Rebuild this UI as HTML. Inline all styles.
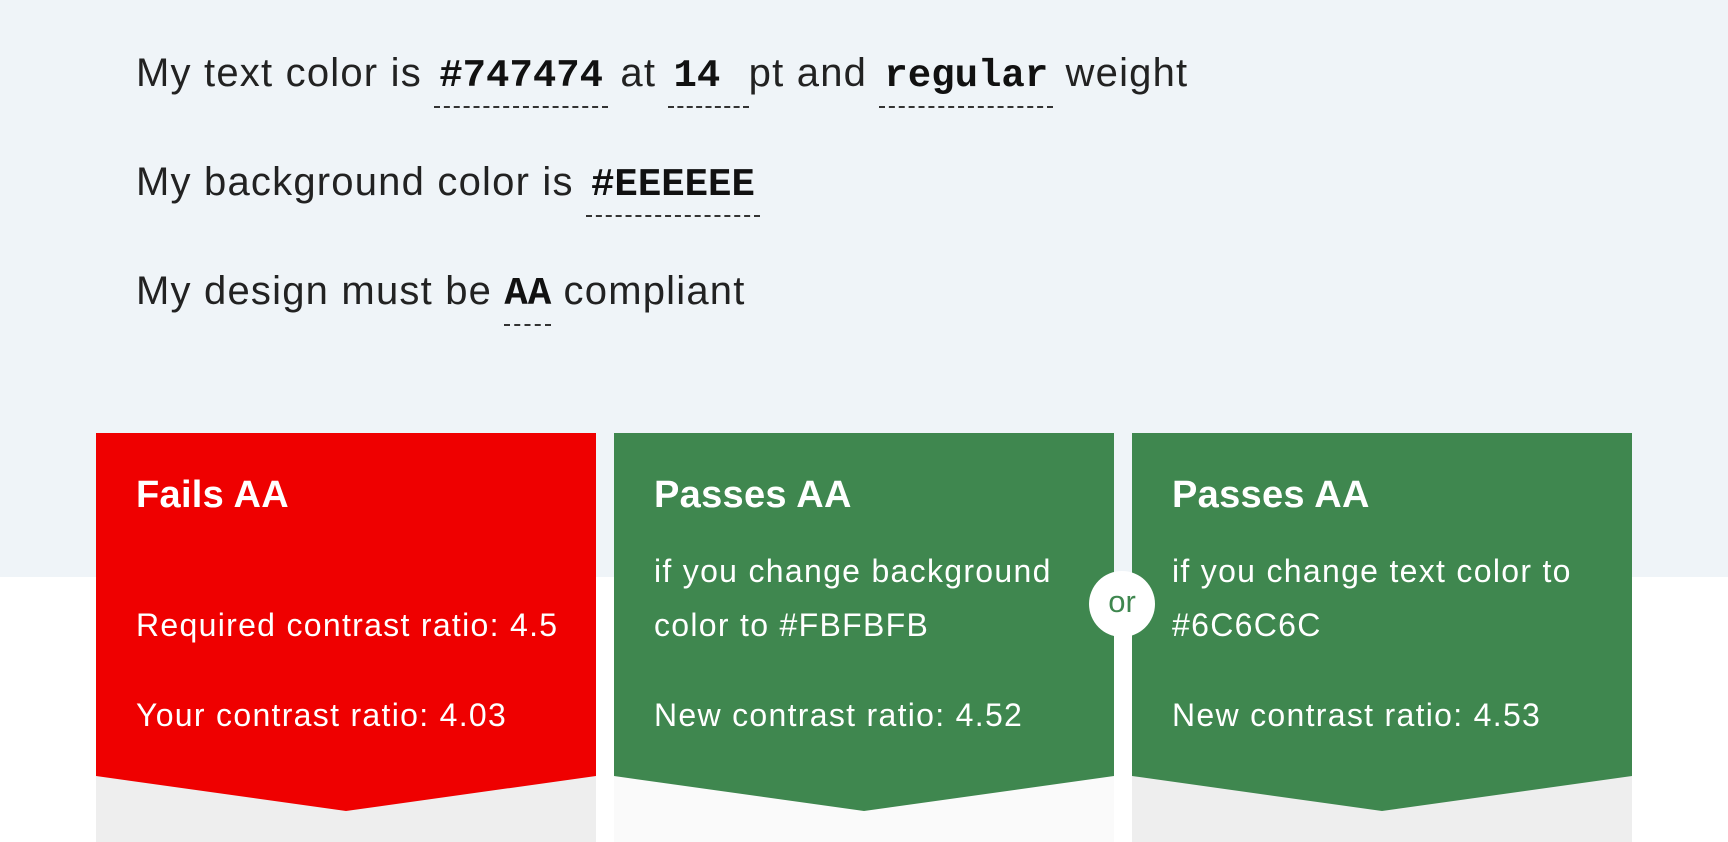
<!DOCTYPE html>
<html><head><meta charset="utf-8"><style>
*{margin:0;padding:0;box-sizing:border-box}
body{width:1728px;height:842px;position:relative;overflow:hidden;background:#fff;font-family:"Liberation Sans",sans-serif}
.top{position:absolute;left:0;top:0;width:1728px;height:577px;background:#eff4f8}
.line{position:absolute;left:136px;font-size:40px;color:#222;white-space:nowrap;line-height:46px;letter-spacing:1.2px}
.m{font-family:"Liberation Mono",monospace;font-weight:bold;color:#111;border-bottom:2px dashed #333;padding:0 5px 8px;letter-spacing:0;font-size:39px}
.card{position:absolute;top:433px;width:500px;height:409px;background:#eee}
.card .fill{position:absolute;left:0;top:0;width:500px;height:378px;clip-path:polygon(0 0,100% 0,100% 343px,50% 378px,0 343px)}
.card .t{position:absolute;left:40px;color:#fff;white-space:nowrap;font-size:32px;line-height:40px;letter-spacing:1.3px}
.card .h{font-size:38px;font-weight:bold;top:42px;letter-spacing:0.3px}
.or{position:absolute;left:1089px;top:571px;width:66px;height:66px;border-radius:50%;background:#fff;color:#3f874f;font-size:31px;text-align:center;line-height:62px}
</style></head><body>
<div class="top"></div>
<div class="line" style="top:50px">My text color is <span class="m">#747474</span> at <span class="m">14 </span> pt and <span class="m">regular</span> weight</div>
<div class="line" style="top:159px">My background color is <span class="m">#EEEEEE</span></div>
<div class="line" style="top:268px">My design must be <span class="m" style="padding:0 0 8px">AA</span> compliant</div>

<div class="card" style="left:96px"><div class="fill" style="background:#ef0000"></div>
<div class="t h">Fails AA</div>
<div class="t" style="top:172px">Required contrast ratio: 4.5</div>
<div class="t" style="top:262px">Your contrast ratio: 4.03</div></div>

<div class="card" style="left:614px;background:#fafafa"><div class="fill" style="background:#3f874f"></div>
<div class="t h">Passes AA</div>
<div class="t" style="top:118px">if you change background</div>
<div class="t" style="top:172px">color to #FBFBFB</div>
<div class="t" style="top:262px">New contrast ratio: 4.52</div></div>

<div class="card" style="left:1132px"><div class="fill" style="background:#3f874f"></div>
<div class="t h">Passes AA</div>
<div class="t" style="top:118px">if you change text color to</div>
<div class="t" style="top:172px">#6C6C6C</div>
<div class="t" style="top:262px">New contrast ratio: 4.53</div></div>

<div class="or">or</div>
</body></html>
